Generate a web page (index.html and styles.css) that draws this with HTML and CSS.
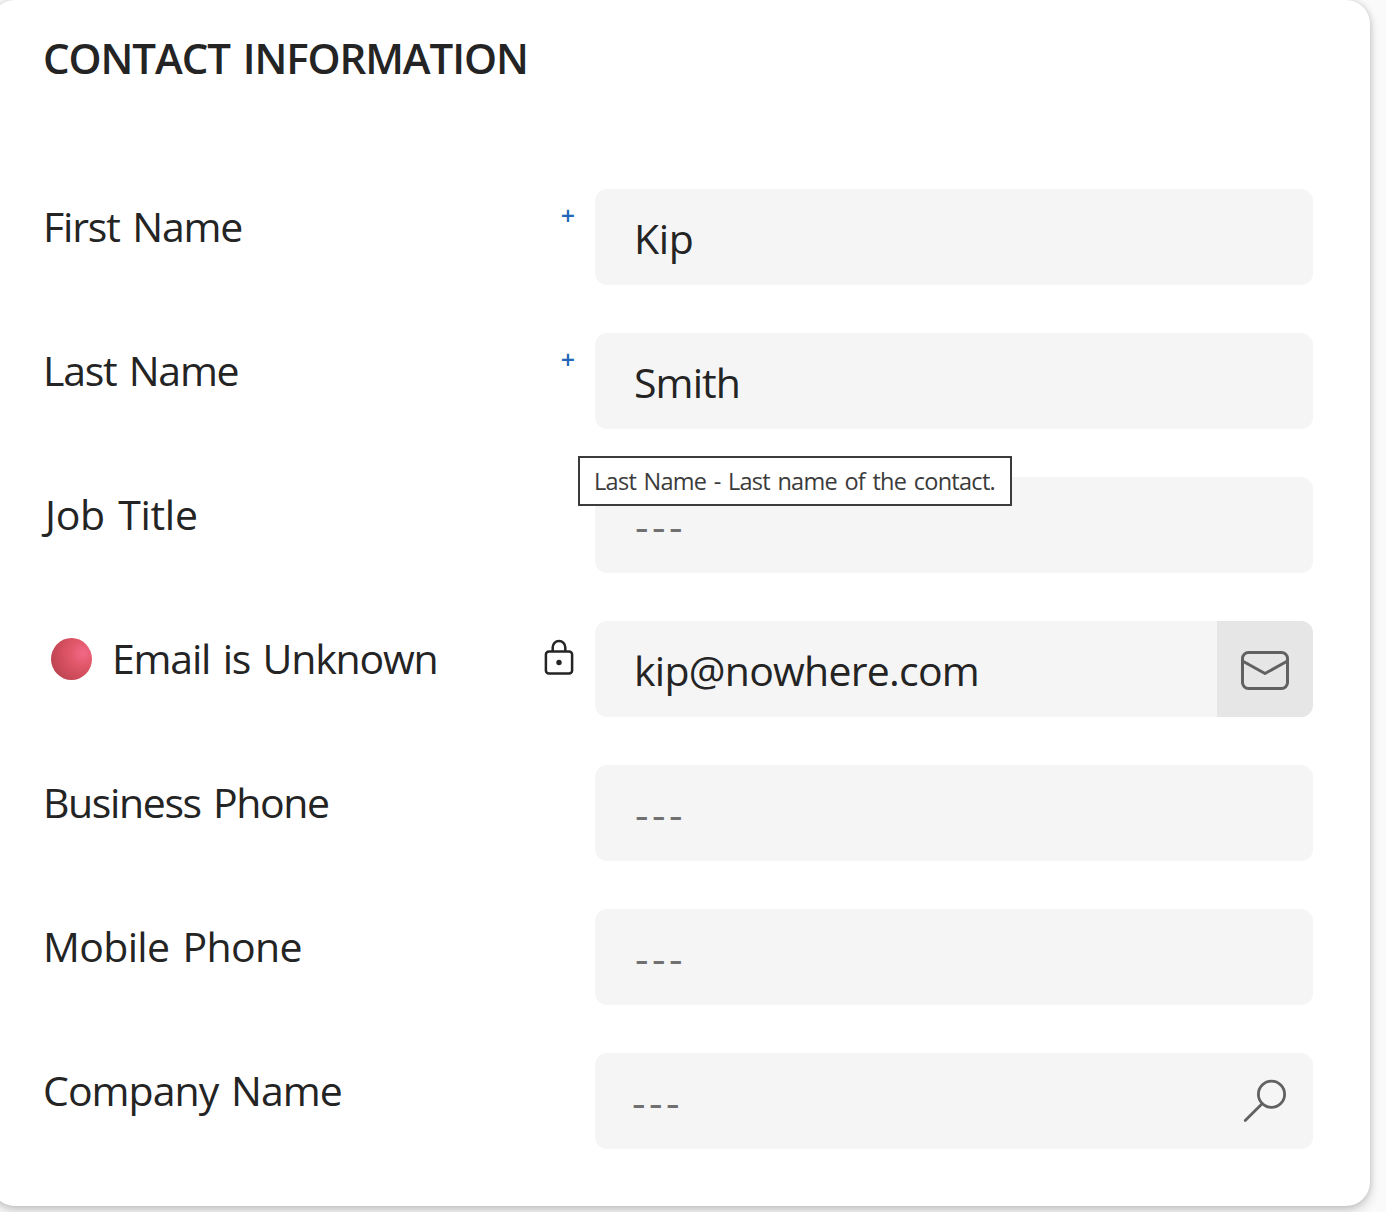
FILE: index.html
```
<!DOCTYPE html>
<html lang="en">
<head>
    <meta charset="UTF-8">
    <meta name="viewport" content="width=device-width, initial-scale=1.0">
    <title>Contact Information</title>
    <link rel="stylesheet" href="styles.css">
</head>
<body>
    <section class="card">
        <h2>CONTACT INFORMATION</h2>

        <div class="rows">
            <div class="row">
                <div class="label first-name">First Name</div>
                <span class="mark">+</span>
                <div class="field"><span class="value kip">Kip</span></div>
            </div>

            <div class="row">
                <div class="label last-name">Last Name</div>
                <span class="mark">+</span>
                <div class="field"><span class="value smith">Smith</span></div>
            </div>

            <div class="row">
                <div class="label job-title">Job Title</div>
                <div class="field">
                    <span class="value empty">---</span>
                    <div class="tooltip">Last Name - Last name of the contact.</div>
                </div>
            </div>

            <div class="row">
                <div class="label email">
                    <span class="dot"></span>
                    <span>Email is Unknown</span>
                </div>
                <svg class="lock" width="30" height="38" viewBox="0 0 30 38" fill="none" stroke="#242424" stroke-width="2.5">
                    <rect x="1.9" y="12.4" width="26.2" height="22.2" rx="3"/>
                    <path d="M8.7 12.4V8.3a6.3 6.3 0 0 1 12.6 0v4.1"/>
                    <circle cx="15" cy="23.5" r="2.7" fill="#242424" stroke="none"/>
                </svg>
                <div class="field">
                    <span class="value address">kip@nowhere.com</span>
                    <div class="mail">
                        <svg width="50" height="42" viewBox="0 0 50 42" fill="none" stroke="#616161" stroke-width="3" stroke-linejoin="round">
                            <rect x="2.5" y="2.5" width="45" height="36" rx="6"/>
                            <path d="M2.5 11L25 23.5l22.5-12.5"/>
                        </svg>
                    </div>
                </div>
            </div>

            <div class="row">
                <div class="label business">Business Phone</div>
                <div class="field"><span class="value empty">---</span></div>
            </div>

            <div class="row">
                <div class="label mobile">Mobile Phone</div>
                <div class="field"><span class="value empty">---</span></div>
            </div>

            <div class="row">
                <div class="label company">Company Name</div>
                <div class="field lookup">
                    <span class="value empty">---</span>
                    <svg class="search" width="44" height="44" viewBox="0 0 44 44" fill="none" stroke="#616161" stroke-width="2.8" stroke-linecap="round">
                        <circle cx="28.5" cy="15.3" r="13.1"/>
                        <path d="M19.1 24.7L2.2 41.6"/>
                    </svg>
                </div>
            </div>
        </div>
    </section>
</body>
</html>
```
FILE: styles.css
```
* {
    box-sizing: border-box;
}
body {
    margin: 0;
    height: 1212px;
    overflow: hidden;
    background: #fafafa;
    color: #242424;
    font-family: "Segoe UI", "Open Sans", sans-serif;
    font-size: 41px;
    line-height: 56px;
    word-spacing: 3px;
}
.card {
    width: 1379px;
    height: 1206px;
    margin-left: -9px;
    padding: 30px 57px 0 51px;
    background: #fff;
    border-radius: 24px;
    box-shadow: 0 6px 12px rgba(0,0,0,0.16), 0 0 6px rgba(0,0,0,0.16);
}
h2 {
    margin: 0 0 103px;
    padding-left: 1px;
    font-size: 42px;
    font-weight: 600;
    letter-spacing: -1.08px;
}
.rows {
    display: flex;
    flex-direction: column;
    gap: 48px;
}
.row {
    display: flex;
    align-items: flex-start;
    height: 96px;
}
.label {
    flex: 1;
    padding: 9px 0 0 1px;
    white-space: nowrap;
}
.first-name {
    letter-spacing: -1.15px;
}
.last-name {
    letter-spacing: -1.25px;
}
.job-title {
    padding-left: 3px;
    letter-spacing: -0.3px;
}
.email {
    display: flex;
    align-items: center;
    gap: 20px;
    padding-left: 9px;
    letter-spacing: -1.2px;
}
.business {
    letter-spacing: -1.38px;
}
.mobile {
    letter-spacing: -0.65px;
}
.company {
    letter-spacing: -0.95px;
}
.dot {
    width: 41px;
    height: 42px;
    margin-top: 2px;
    border-radius: 50%;
    background: radial-gradient(circle at 78% 36%, #f2698a 0%, #e2596c 28%, #cf4c5b 58%, #b8434f 85%, #a84a5c 100%);
}
.mark {
    margin-right: 20px;
    padding-top: 12px;
    color: #2266b8;
    font-size: 25px;
    font-weight: 600;
    line-height: 28px;
}
.lock {
    margin: 18px 21px 0 0;
}
.field {
    position: relative;
    display: flex;
    align-items: center;
    width: 718px;
    height: 96px;
    padding-left: 39px;
    background: #f5f5f5;
    border-radius: 12px;
}
.value {
    flex: 1;
    padding-top: 2px;
}
.kip {
    letter-spacing: -0.3px;
}
.smith {
    letter-spacing: -0.9px;
}
.address {
    letter-spacing: -0.75px;
}
.empty {
    padding: 2px 0 0 1px;
    color: #707070;
    font-size: 42px;
    letter-spacing: 3.5px;
}
.mail {
    display: flex;
    align-items: center;
    justify-content: center;
    width: 96px;
    height: 96px;
    padding-top: 4px;
    background: #e6e6e6;
    border-radius: 0 12px 12px 0;
}
.lookup {
    padding-left: 36px;
}
.search {
    margin-right: 26px;
}
.tooltip {
    position: absolute;
    top: -21px;
    left: -17px;
    width: 434px;
    height: 50px;
    padding-left: 14px;
    background: #fff;
    border: 2px solid #3b3b3b;
    color: #3b3b3b;
    font-size: 23.5px;
    line-height: 46px;
    letter-spacing: -0.71px;
    word-spacing: 2px;
    white-space: nowrap;
}
```
